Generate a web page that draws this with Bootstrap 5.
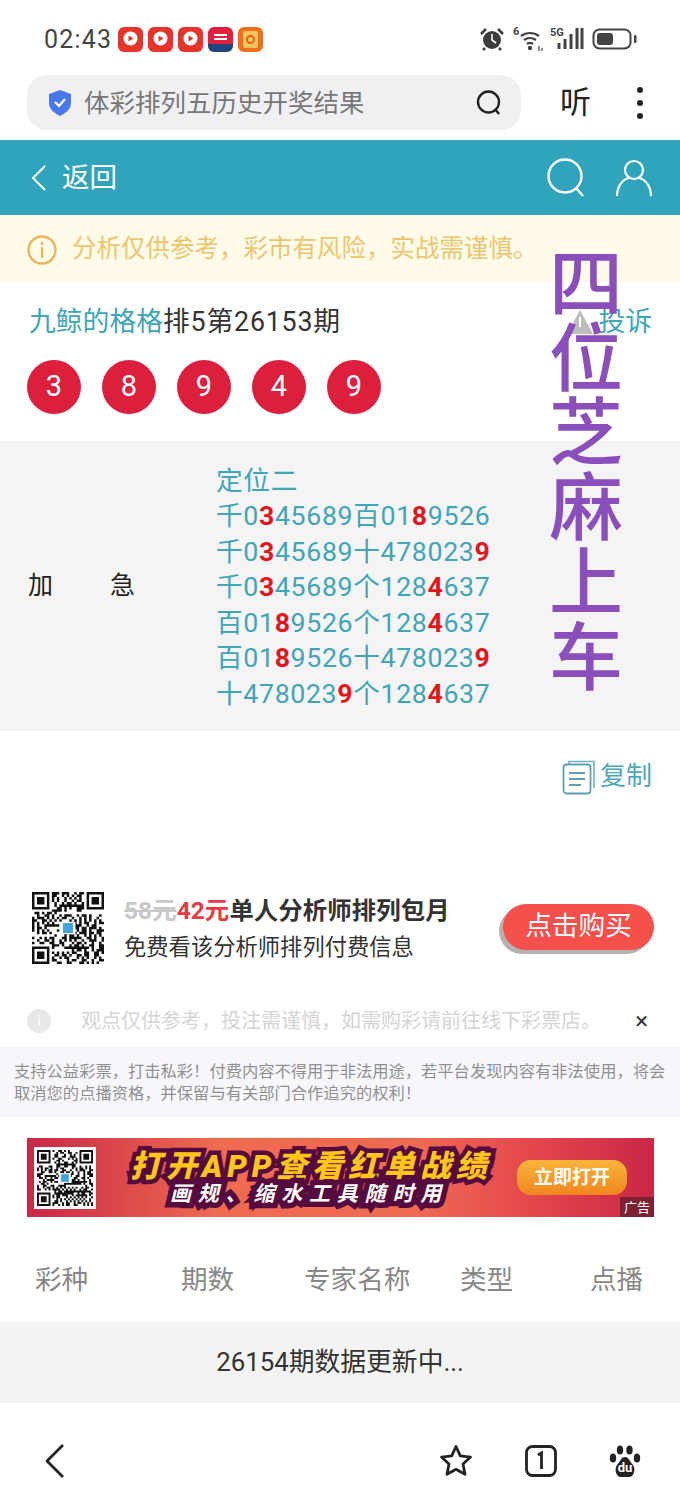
<!DOCTYPE html>
<html lang="zh">
<head>
    <meta charset="UTF-8">
    <meta name="viewport" content="width=device-width, initial-scale=1">
    <title>排列五</title>
    <link rel="stylesheet" href="https://cdn.jsdelivr.net/npm/bootstrap@5.3.0/dist/css/bootstrap.min.css">
    <style>
        body { width: 680px; height: 1500px; overflow: hidden; background: #fff; color: #333;
               font-family: Roboto, "Noto Sans CJK SC", sans-serif; position: relative; }
        .status-bar { height: 75px; padding: 3px 42px 0 44px; color: #444; }
        .status-time { font-size: 25px; line-height: 1; letter-spacing: 1.2px; margin-right: 6px; }
        .app-dot { width: 25px; height: 25px; border-radius: 6px; background: #e5352b; margin-right: 5px; }
        .app-blue { background: linear-gradient(#e0203c 70%, #20457e 70%); }
        .app-orange { background: #f0701a; }
        .addr-row { height: 65px; padding: 0 28px 10px 27px; }
        .addr-pill { width: 494px; height: 55px; background: #f0f0f2; border-radius: 20px; padding: 0 18px 0 21px; }
        .addr-text { font-size: 25.5px; color: #777; margin-left: 12px; line-height: 1; padding-top: 2px; }
        .listen { font-size: 31px; color: #222; line-height: 1; margin-left: 39px; }
        .dots { margin-right: 9px; }
        .dots span { display: block; width: 6px; height: 6px; background: #222; border-radius: 50%; margin: 7px 0; }
        .top-head { height: 75px; background: #2fa4bb; color: #fff; padding: 0 27px 0 30px; }
        .top-back { font-size: 27.5px; line-height: 1; margin-left: 14px; }
        .head-user { margin-left: 28px; }
        .notice { height: 67px; background: #fffbe8; color: #ecc56f; font-size: 24.5px; padding: 2px 0 0 27px; }
        .notice-mark { width: 30px; height: 30px; margin-right: 15px; }
        .title-row { height: 78px; padding: 3px 28px 0 29px; font-size: 26.8px; color: #333; }
        .title-nums { letter-spacing: .8px; }
        .teal-text { color: #3fa5b8; }
        .ball-row { height: 81px; padding-left: 27px; gap: 21px; align-items: flex-start; }
        .ball { width: 54px; height: 54px; border-radius: 50%; background: #dc1f3c; color: #fff; font-size: 29px; }
        .gray-block { height: 290px; background: #f4f4f4; }
        .gray-label { width: 216px; padding-left: 28px; font-size: 25px; color: #222; }
        .gray-label span:first-child { margin-right: 57px; }
        .pick-lines { font-size: 26.7px; line-height: 35.5px; color: #3fa5b8; white-space: nowrap; letter-spacing: .65px; padding-top: 4px; }
        .pick-lines b { color: #e8141c; }
        .copy-row { height: 90px; padding: 1px 28px 0 0; font-size: 26px; color: #4ea8ba; }
        .buy-row { height: 75px; margin-top: 69px; padding: 0 26px 0 32px; }
        .qr-box { width: 72px; height: 72px; margin-right: 20px; }
        .buy-copy { padding-top: 2px; }
        .buy-one { font-size: 24.4px; font-weight: 700; color: #333; line-height: 1.2; white-space: nowrap; letter-spacing: .1px; }
        .buy-one s { color: #c8c8c8; }
        .buy-one em { color: #e83a45; font-style: normal; }
        .buy-two { font-size: 22.3px; color: #333; line-height: 1.2; margin-top: 9px; white-space: nowrap; }
        .buy-btn { width: 151px; height: 46px; border-radius: 23px; background: #f5504a; color: #fff; font-size: 26.7px;
                   box-shadow: -4px 4px 0 #b5b1b1; line-height: 1; margin-top: -2px; }
        .warn-row { height: 82px; padding: 30px 30px 0 27px; color: #d4d4d4; font-size: 20px; }
        .warn-mark { width: 24px; height: 24px; border-radius: 50%; background: #e8e8e8; color: #fff; font-size: 15px; margin-right: 30px; }
        .warn-x { color: #333; font-size: 24px; line-height: 1; margin-right: 2px; }
        .legal { height: 70px; background: #f7f7fb; color: #909090; font-size: 16.3px; line-height: 22px; padding: 14px 10px 0 14px; }
        .promo-wrap { position: relative; margin: 21px 26px 0 27px; }
        .promo { height: 79px; background: linear-gradient(90deg, #c92746, #ee6a50 30%, #ef6a52 62%, #e4484c 80%, #c92746);
                 overflow: hidden; padding-left: 7px; }
        .promo-qr { width: 62px; height: 62px; background: #fff; padding: 3px; margin-right: 34px; }
        .promo-text { color: #ffc61a; font-size: 31px; font-weight: 900; line-height: 1; letter-spacing: 4.9px; white-space: nowrap;
                      font-style: italic; -webkit-text-stroke: 9px #560b3e; paint-order: stroke fill; }
        .promo-sub { color: #fff; font-size: 21px; font-weight: 700; letter-spacing: 6.8px; line-height: 1; margin: 2px 0 0 40px; white-space: nowrap;
                     font-style: italic; -webkit-text-stroke: 11px #560b3e; paint-order: stroke fill; }
        .promo-btn { width: 110px; height: 35px; border-radius: 14px; background: linear-gradient(#f9b43c, #f0861e); color: #fff;
                     font-size: 19px; font-weight: 700; line-height: 1; position: absolute; left: 490px; top: 22px; }
        .promo-tag { position: absolute; right: 0; bottom: 0; width: 34px; height: 20px; background: #7d2233; color: #fff; font-size: 13px; line-height: 1; }
        .col-heads { height: 83px; margin-top: 21px; font-size: 26.6px; color: #888; line-height: 1; padding-top: 29px; }
        .head-a { margin-left: 35px; width: 146px; }
        .head-b { width: 123px; }
        .head-c { width: 156px; }
        .head-d { width: 130px; }
        .update-row { height: 81px; background: #f3f3f3; font-size: 25.8px; color: #333; margin-top: 1px; }
        .bottom-bar { height: 97px; padding: 18px 39px 0 44px; }
        .bottom-bar svg { display: block; }
        .bar-gap { margin-left: 52px; }
        .stamp { position: absolute; left: 549px; top: 248px; width: 70px; font-size: 74px; font-weight: 500; line-height: 74.7px; color: #8a4fba; text-align: center; }
        .warn-tri { position: absolute; left: 566px; top: 309px; }
    </style>
</head>
<body>
    <!-- 状态栏 -->
    <div class="status-bar d-flex align-items-center">
        <span class="status-time">02:43</span>
        <span class="app-dot d-flex align-items-center justify-content-center"><svg width="17" height="17" viewBox="0 0 17 17"><circle cx="8.5" cy="7.5" r="7" fill="#fff"/><path d="M6.500 4.500 11.500 7.500 6.500 10.500z" fill="#e5352b"/></svg></span>
        <span class="app-dot d-flex align-items-center justify-content-center"><svg width="17" height="17" viewBox="0 0 17 17"><circle cx="8.5" cy="7.5" r="7" fill="#fff"/><path d="M6.500 4.500 11.500 7.500 6.500 10.500z" fill="#e5352b"/></svg></span>
        <span class="app-dot d-flex align-items-center justify-content-center"><svg width="17" height="17" viewBox="0 0 17 17"><circle cx="8.5" cy="7.5" r="7" fill="#fff"/><path d="M6.500 4.500 11.500 7.500 6.500 10.500z" fill="#e5352b"/></svg></span>
        <span class="app-dot app-blue d-flex align-items-center justify-content-center"><svg width="17" height="17" viewBox="0 0 17 17"><path d="M2 3h13v2H2zM2 7h13v2H2z" fill="#fff"/></svg></span>
        <span class="app-dot app-orange d-flex align-items-center justify-content-center"><svg width="17" height="19" viewBox="0 0 17 19"><rect x="1" y="1" width="15" height="17" rx="2" fill="#f9c65c"/><circle cx="8.500" cy="9.500" r="3.500" fill="none" stroke="#e5601a" stroke-width="2"/></svg></span>
        <span class="ms-auto d-flex align-items-center gap-1">
            <svg width="26" height="24" viewBox="0 0 26 24"><circle cx="13" cy="13" r="9" fill="#3c3c3c"/><path d="M13 7v6l4 3" stroke="#fff" stroke-width="1.600" fill="none"/><path d="M2 7 7 2M24 7 19 2M6 21l-2 2M20 21l2 2" stroke="#3c3c3c" stroke-width="2.500"/></svg>
            <svg class="ms-1" width="33" height="26" viewBox="0 0 33 26"><text x="0" y="9" font-size="11" font-weight="700" fill="#444" font-family="Roboto">6</text><path d="M8 10a15 15 0 0 1 18 0M11 14a10 10 0 0 1 12 0M14 18a5 5 0 0 1 6 0" stroke="#444" stroke-width="2.200" fill="none"/><circle cx="17" cy="22" r="2.200" fill="#444"/><path d="M26 20v5M29 22v3" stroke="#444" stroke-width="1.200"/></svg>
            <svg width="34" height="26" viewBox="0 0 34 26"><text x="0" y="10" font-size="11" font-weight="700" fill="#444" font-family="Roboto">5G</text><path d="M9 17v6M15 13v10M21 8v15M27 2v21M32 2v21" stroke="#444" stroke-width="3"/></svg>
            <svg class="ms-1" width="46" height="24" viewBox="0 0 46 24"><rect x="1.500" y="2.500" width="37" height="19" rx="6" fill="none" stroke="#444" stroke-width="2"/><rect x="5" y="6" width="16" height="12" rx="3" fill="#444"/><rect x="42" y="8" width="2.500" height="8" rx="1" fill="#444"/></svg>
        </span>
    </div>

    <!-- 地址栏 -->
    <div class="addr-row d-flex align-items-center">
        <div class="addr-pill d-flex align-items-center">
            <svg width="24" height="28" viewBox="0 0 24 28"><path d="M12 1 23 5v9c0 6-5 10-11 13C6 24 1 20 1 14V5z" fill="#4a78e8"/><path d="M7 13l4 4 6-7" stroke="#fff" stroke-width="2.200" fill="none"/></svg>
            <span class="addr-text">体彩排列五历史开奖结果</span>
            <svg class="ms-auto" width="28" height="28" viewBox="0 0 28 28"><circle cx="13.500" cy="13" r="10.500" fill="none" stroke="#222" stroke-width="2.400"/><path d="M20 20l4 5" stroke="#222" stroke-width="2.400"/></svg>
        </div>
        <span class="listen">听</span>
        <span class="dots ms-auto"><span></span><span></span><span></span></span>
    </div>

    <!-- 顶部 -->
    <div class="top-head d-flex align-items-center">
        <svg width="18" height="28" viewBox="0 0 18 28"><path d="M15 2 3 14l12 12" stroke="#fff" stroke-width="2" fill="none"/></svg>
        <span class="top-back">返回</span>
        <svg class="ms-auto" width="40" height="40" viewBox="0 0 40 40"><circle cx="18" cy="18" r="16.500" fill="none" stroke="#fff" stroke-width="2.400"/><path d="M29 30l7 8" stroke="#fff" stroke-width="2.400"/></svg>
        <svg class="head-user" width="38" height="38" viewBox="0 0 38 38"><circle cx="19" cy="11" r="9" fill="none" stroke="#fff" stroke-width="2.200"/><path d="M2 37c0-10 6-17 12-18M36 37c0-10-6-17-12-18" stroke="#fff" stroke-width="2.200" fill="none"/></svg>
    </div>

    <div class="notice d-flex align-items-center">
        <svg class="notice-mark" viewBox="0 0 30 30"><circle cx="15" cy="15" r="13.500" fill="none" stroke="#e8b65c" stroke-width="2.400"/><path d="M15 12v11M15 7v3" stroke="#e8b65c" stroke-width="2.200"/></svg>
        <span>分析仅供参考，彩市有风险，实战需谨慎。</span>
    </div>

    <div class="title-row d-flex align-items-center">
        <span class="teal-text">九鲸的格格</span><span class="title-nums">排5第26153期</span>
        <span class="teal-text ms-auto">投诉</span>
    </div>

    <div class="ball-row d-flex">
        <span class="ball d-flex align-items-center justify-content-center">3</span>
        <span class="ball d-flex align-items-center justify-content-center">8</span>
        <span class="ball d-flex align-items-center justify-content-center">9</span>
        <span class="ball d-flex align-items-center justify-content-center">4</span>
        <span class="ball d-flex align-items-center justify-content-center">9</span>
    </div>

    <div class="gray-block d-flex align-items-center">
        <div class="gray-label"><span>加</span><span>急</span></div>
        <div class="pick-lines">
            <div>定位二</div>
            <div>千0<b>3</b>45689百01<b>8</b>9526</div>
            <div>千0<b>3</b>45689十478023<b>9</b></div>
            <div>千0<b>3</b>45689个128<b>4</b>637</div>
            <div>百01<b>8</b>9526个128<b>4</b>637</div>
            <div>百01<b>8</b>9526十478023<b>9</b></div>
            <div>十478023<b>9</b>个128<b>4</b>637</div>
        </div>
    </div>

    <div class="copy-row d-flex align-items-center justify-content-end">
        <svg class="me-1" width="34" height="36" viewBox="0 0 34 36"><path d="M7 5V2.500h25V29" fill="none" stroke="#6fb0be" stroke-width="1.600"/><rect x="1.500" y="5.500" width="27" height="29" rx="3" fill="#fff" stroke="#5f9fb0" stroke-width="1.800"/><path d="M7 14h16M7 20h16M7 26h12" stroke="#5f9fb0" stroke-width="1.800"/></svg>
        <span>复制</span>
    </div>

    <div class="buy-row d-flex align-items-center">
        <svg class="qr-box js-qr flex-shrink-0" viewBox="0 0 29 29" data-seed="7"></svg>
        <div class="buy-copy">
            <div class="buy-one"><s>58元</s><em>42元</em>单人分析师排列包月</div>
            <div class="buy-two">免费看该分析师排列付费信息</div>
        </div>
        <div class="buy-btn ms-auto d-flex align-items-center justify-content-center">点击购买</div>
    </div>

    <div class="warn-row d-flex align-items-center">
        <span class="warn-mark d-flex align-items-center justify-content-center">i</span>
        <span>观点仅供参考，投注需谨慎，如需购彩请前往线下彩票店。</span>
        <span class="warn-x ms-auto">×</span>
    </div>

    <div class="legal">支持公益彩票，打击私彩！付费内容不得用于非法用途，若平台发现内容有非法使用，将会取消您的点播资格，并保留与有关部门合作追究的权利！</div>

    <!-- 广告 -->
    <div class="promo-wrap">
        <div class="promo d-flex align-items-center">
            <div class="promo-qr flex-shrink-0"><svg class="js-qr d-block w-100 h-100" viewBox="0 0 29 29" data-seed="23"></svg></div>
            <div class="flex-shrink-0">
                <div class="promo-text">打开APP查看红单战绩</div>
                <div class="promo-sub">画规、缩水工具随时用</div>
            </div>
        </div>
        <div class="promo-btn d-flex align-items-center justify-content-center">立即打开</div>
        <div class="promo-tag d-flex align-items-center justify-content-center">广告</div>
    </div>

    <div class="col-heads d-flex">
        <span class="head-a">彩种</span><span class="head-b">期数</span><span class="head-c">专家名称</span><span class="head-d">类型</span><span>点播</span>
    </div>

    <div class="update-row d-flex align-items-center justify-content-center">26154期数据更新中...</div>

    <!-- 底部栏 -->
    <div class="bottom-bar d-flex align-items-center">
        <svg width="24" height="36" viewBox="0 0 24 36"><path d="M19 2 3 18l16 16" stroke="#222" stroke-width="2.800" fill="none" stroke-linejoin="round"/></svg>
        <svg class="ms-auto" width="34" height="34" viewBox="0 0 34 34"><path d="M17 2.500l4.300 9.400 10.200 1.200-7.500 7 2 10.200-9-5-9 5 2-10.200-7.500-7 10.200-1.200z" fill="none" stroke="#222" stroke-width="2.800" stroke-linejoin="round"/></svg>
        <svg class="bar-gap" width="32" height="32" viewBox="0 0 32 32"><rect x="1.500" y="1.500" width="29" height="29" rx="6" fill="none" stroke="#222" stroke-width="2.800"/><path d="M13 10l3.500-2v16" stroke="#222" stroke-width="2.800" fill="none"/></svg>
        <svg class="bar-gap" width="32" height="34" viewBox="0 0 32 34"><ellipse cx="11" cy="6" rx="3.200" ry="4.500" fill="#222"/><ellipse cx="20.500" cy="6" rx="3.200" ry="4.500" fill="#222"/><ellipse cx="4" cy="14" rx="3.200" ry="4.500" fill="#222"/><ellipse cx="28" cy="14" rx="3.200" ry="4.500" fill="#222"/><path d="M16 13c4 0 5 5 8 8 3 4 1 12-4 12h-8c-5 0-7-8-4-12 3-3 4-8 8-8z" fill="#222"/><text x="16" y="28" text-anchor="middle" font-size="13" font-weight="700" fill="#fff" font-family="Roboto">du</text></svg>
    </div>

    <!-- 叠加 -->
    <svg class="warn-tri" width="28" height="26" viewBox="0 0 28 26"><path d="M14 1 27 25H1z" fill="#bdbdbd"/><path d="M14 8v10" stroke="#fff" stroke-width="2"/></svg>
    <div class="stamp">四位芝麻上车</div>

    <script src="https://cdn.jsdelivr.net/npm/bootstrap@5.3.0/dist/js/bootstrap.bundle.min.js"></script>
    <script>
        // 二维码只是示意图案
        document.querySelectorAll(".js-qr").forEach(function (svg) {
            let seed = Number(svg.dataset.seed);
            let d = "";
            function inFinder(x, y) {
                return (x < 8 && y < 8) || (x > 20 && y < 8) || (x < 8 && y > 20);
            }
            for (let y = 0; y < 29; y++) {
                for (let x = 0; x < 29; x++) {
                    seed = (seed * 1103515245 + 12345) % 2147483648;
                    if (!inFinder(x, y) && (seed >> 12) % 2 === 0) d += "M" + x + " " + y + "h1v1h-1z";
                }
            }
            [[0, 0], [22, 0], [0, 22]].forEach(function (p) {
                d += "M" + p[0] + " " + p[1] + "h7v7h-7zM" + (p[0] + 1) + " " + (p[1] + 1) + "v5h5v-5z";
                d += "M" + (p[0] + 2) + " " + (p[1] + 2) + "h3v3h-3z";
            });
            svg.innerHTML = '<path fill-rule="evenodd" d="' + d + '" fill="#111"/>' +
                '<rect x="11.500" y="12" width="6" height="5" fill="#fff"/><rect x="12.500" y="12.500" width="4" height="4" fill="#3fa5d8"/>';
        });
    </script>
</body>
</html>
